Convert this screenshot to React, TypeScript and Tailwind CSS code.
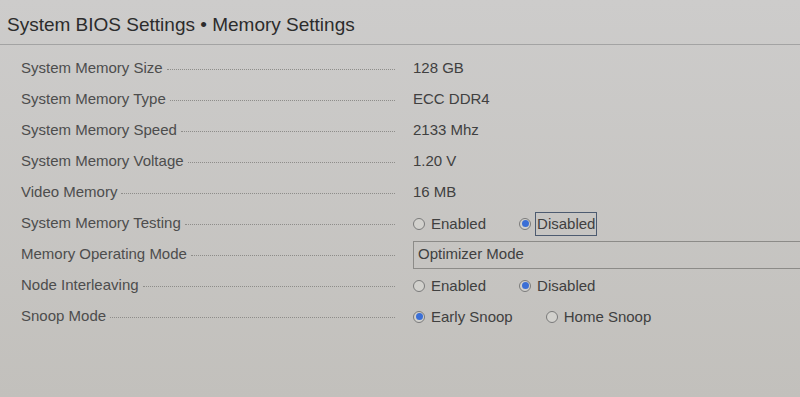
import { ReactNode } from 'react'

type Opt = { label: string; checked?: boolean; focused?: boolean }

function Radio({ checked }: { checked?: boolean }) {
  return (
    <span className="flex h-[12px] w-[12px] shrink-0 items-center justify-center rounded-full border border-[#7a7a7a] bg-[#d2d1cd]">
      {checked && <span className="h-[7px] w-[7px] rounded-full bg-[#3b6fd6]" />}
    </span>
  )
}

function Radios({ options }: { options: Opt[] }) {
  return (
    <div className="flex items-center gap-[31px]">
      {options.map((o) => (
        <div key={o.label} className="flex items-center gap-[4px]">
          <Radio checked={o.checked} />
          <span
            className={
              o.focused
                ? 'border border-[#4d5b70] px-[1px] leading-[22px]'
                : 'border border-transparent px-[1px] leading-[22px]'
            }
          >
            {o.label}
          </span>
        </div>
      ))}
    </div>
  )
}

function Row({ label, children }: { label: string; children: ReactNode }) {
  return (
    <div className="flex h-[31px] items-center">
      <div className="flex w-[374px] items-center">
        <span className="whitespace-nowrap text-[#4d4d4d]">{label}</span>
        <span className="ml-[4px] mt-[2px] h-0 flex-1 border-b border-dotted border-[#8e8d8a]" />
      </div>
      <div className="ml-[18px] flex-1 text-[#404040]">{children}</div>
    </div>
  )
}

export default function App() {
  return (
    <div
      className="h-[397px] w-[800px] overflow-hidden bg-gradient-to-b from-[#cdcccb] to-[#c2c0bc] text-[15px]"
      style={{ fontFamily: '"Liberation Sans", Arial, sans-serif' }}
    >
      <div className="flex h-[45px] items-center border-b border-[#a3a3a3] pl-[7px] pt-[6px]">
        <h1 className="text-[19px] text-[#2c2c2c]">System BIOS Settings • Memory Settings</h1>
      </div>
      <div className="flex flex-col pl-[21px] pt-[8px]">
        <Row label="System Memory Size">128 GB</Row>
        <Row label="System Memory Type">ECC DDR4</Row>
        <Row label="System Memory Speed">2133 Mhz</Row>
        <Row label="System Memory Voltage">1.20 V</Row>
        <Row label="Video Memory">16 MB</Row>
        <Row label="System Memory Testing">
          <Radios options={[{ label: 'Enabled' }, { label: 'Disabled', checked: true, focused: true }]} />
        </Row>
        <Row label="Memory Operating Mode">
          <div className="-mr-[10px] flex h-[28px] items-center border border-[#8c8b88] pl-[4px]">Optimizer Mode</div>
        </Row>
        <Row label="Node Interleaving">
          <Radios options={[{ label: 'Enabled' }, { label: 'Disabled', checked: true }]} />
        </Row>
        <Row label="Snoop Mode">
          <Radios options={[{ label: 'Early Snoop', checked: true }, { label: 'Home Snoop' }]} />
        </Row>
      </div>
    </div>
  )
}
